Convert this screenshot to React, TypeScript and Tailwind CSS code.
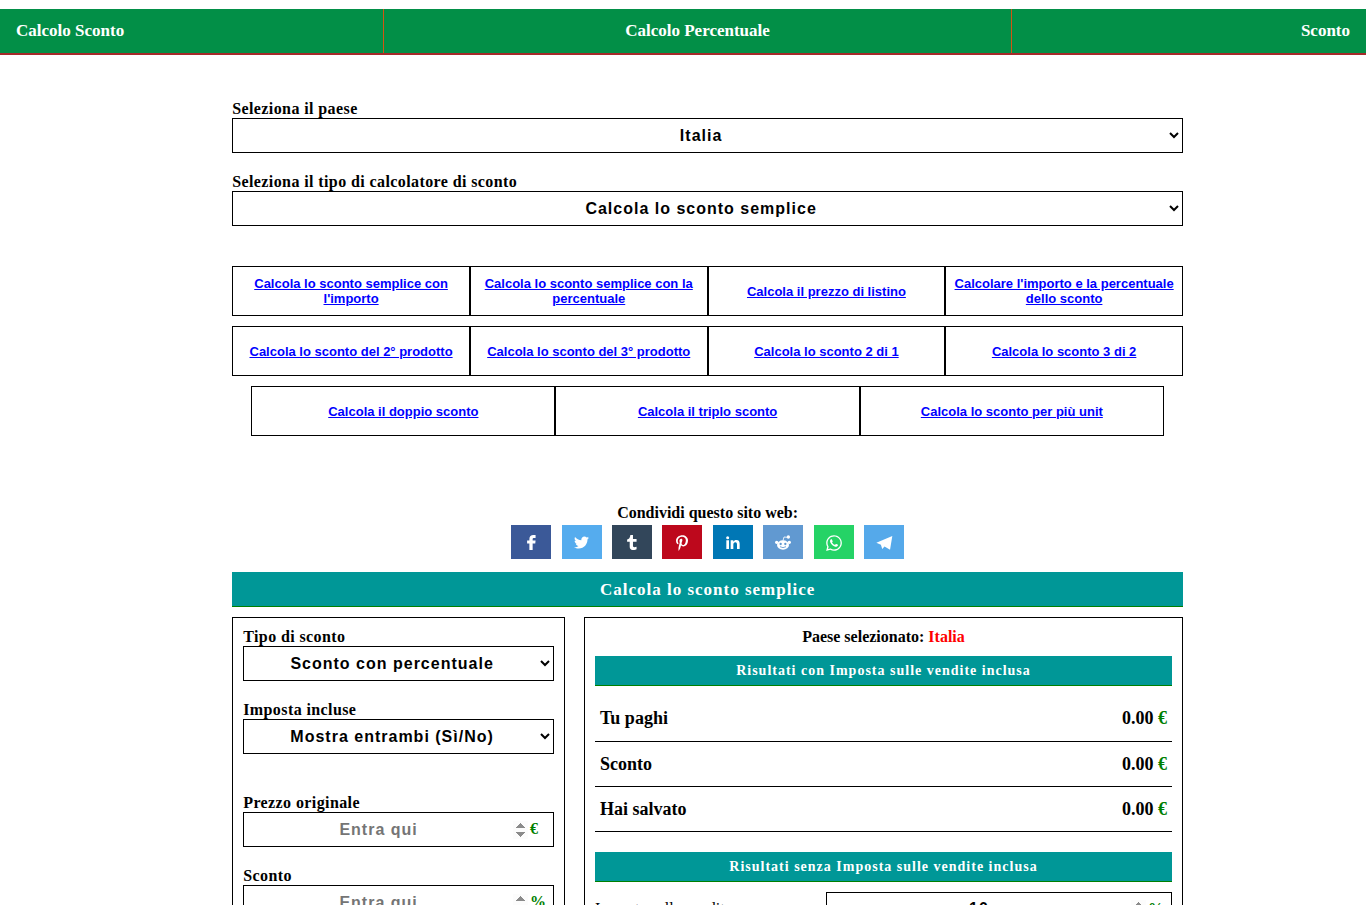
import type { ReactNode } from "react";
import { FaPinterestP, FaTwitter, FaWhatsapp } from "react-icons/fa";

const calculators = [
  "Calcola lo sconto semplice con l'importo",
  "Calcola lo sconto semplice con la percentuale",
  "Calcola il prezzo di listino",
  "Calcolare l'importo e la percentuale dello sconto",
  "Calcola lo sconto del 2° prodotto",
  "Calcola lo sconto del 3° prodotto",
  "Calcola lo sconto 2 di 1",
  "Calcola lo sconto 3 di 2",
];

const moreCalculators = [
  "Calcola il doppio sconto",
  "Calcola il triplo sconto",
  "Calcola lo sconto per più unit",
];

const networks = [
  {
    name: "Facebook",
    color: "bg-[#3b5998]",
    icon: (
      <svg className="w-[9px] h-[15px]" viewBox="0 0 27 46" fill="currentColor">
        <path d="M7 46V26H0v-9h7v-5C7 4 12 0 19 0h7v9h-4c-4 0-5 1-5 4v4h9l-1 9h-8v20z" />
      </svg>
    ),
  },
  { name: "Twitter", color: "bg-[#55acee]", icon: <FaTwitter size={15} /> },
  {
    name: "Tumblr",
    color: "bg-[#32465a]",
    icon: (
      <svg className="w-[10px] h-[15px]" viewBox="0 0 30 46" fill="currentColor">
        <path d="M10 0h8v12h11v9H18v13c0 4 5 4 11 2v8c-9 4-21 3-21-7V21H0v-7c6-1 9-6 10-14z" />
      </svg>
    ),
  },
  { name: "Pinterest", color: "bg-[#bd081c]", icon: <FaPinterestP size={16} /> },
  {
    name: "LinkedIn",
    color: "bg-[#0077b5]",
    icon: (
      <svg className="w-[14px] h-[13px]" viewBox="0 0 42 39" fill="currentColor">
        <circle cx="5" cy="5" r="4.500" />
        <path d="M1 13h8v26H1zM14 13h8v4c2-3 5-5 9-5 8 0 10 5 10 12v15h-8V26c0-4-1-7-5-7s-6 3-6 7v13h-8z" />
      </svg>
    ),
  },
  {
    name: "Reddit",
    color: "bg-[#6199d1]",
    icon: (
      <svg className="w-4 h-[15px]" viewBox="0 0 48 45" fill="currentColor">
        <ellipse cx="24" cy="30" rx="18" ry="14" />
        <circle cx="5" cy="22" r="5" />
        <circle cx="43" cy="22" r="5" />
        <circle cx="40" cy="6" r="5" />
        <path d="M24 17 27 6 38 7" fill="none" stroke="currentColor" strokeWidth="2.500" />
        <circle cx="17" cy="27" r="3.500" fill="#6199d1" />
        <circle cx="31" cy="27" r="3.500" fill="#6199d1" />
        <path d="M15 35q9 6 18 0" fill="none" stroke="#6199d1" strokeWidth="2.500" />
      </svg>
    ),
  },
  { name: "WhatsApp", color: "bg-[#25d366]", icon: <FaWhatsapp size={18} /> },
  {
    name: "Telegram",
    color: "bg-[#55a9ea]",
    icon: (
      <svg className="w-[17px] h-[14px]" viewBox="0 0 50 43" fill="currentColor">
        <path d="M49 0 0 21 14 27 18 40 25 32 42 42Z" />
      </svg>
    ),
  },
];

const results = ["Tu paghi", "Sconto", "Hai salvato"];

const labelClass = "block text-[16px] leading-[18px] font-bold tracking-wide";

const controlClass =
  "w-full h-[35px] border border-black bg-white text-center text-[16px] font-bold tracking-[1px] font-['Liberation_Sans',sans-serif]";

function SelectField({ id, label, options }: { id: string; label: string; options: string[] }) {
  return (
    <div>
      <label htmlFor={id} className={labelClass}>{label}</label>
      <select id={id} className={`${controlClass} pr-px`}>
        {options.map(option => (
          <option key={option}>{option}</option>
        ))}
      </select>
    </div>
  );
}

function NumberInput({ id, unit, defaultValue }: { id: string; unit: string; defaultValue?: number }) {
  return (
    <div className="relative">
      <input
        id={id}
        type="number"
        placeholder="Entra qui"
        defaultValue={defaultValue}
        className={`${controlClass} block pr-[25px] placeholder:text-[#757575] [&::-webkit-inner-spin-button]:opacity-100`}
      />
      <span className="absolute left-full top-2 -ml-6 text-[16px] leading-[18px] font-bold text-[#008000]">{unit}</span>
    </div>
  );
}

function NumberField({ id, label, unit }: { id: string; label: string; unit: string }) {
  return (
    <div>
      <label htmlFor={id} className={labelClass}>{label}</label>
      <NumberInput id={id} unit={unit} />
    </div>
  );
}

function CalculatorLink({ children }: { children: ReactNode }) {
  return (
    <div className="flex items-center justify-center h-[50px] border border-black px-2 text-center">
      <a href="#calcolo" className="text-[13px] leading-[15px] font-bold text-[#0000ff] underline font-['Liberation_Sans',sans-serif]">
        {children}
      </a>
    </div>
  );
}

function ResultsTable() {
  return (
    <table className="w-full mt-[10px] text-[18px] leading-5 font-bold border-collapse">
      <tbody>
        {results.map(name => (
          <tr key={name} className="h-[45px] border-b border-black">
            <th scope="row" className="px-[5px] text-left">{name}</th>
            <td className="px-[5px] text-right">
              0.00 <span className="text-[#008000]">€</span>
            </td>
          </tr>
        ))}
      </tbody>
    </table>
  );
}

function ResultsTitle({ children }: { children: ReactNode }) {
  return (
    <h3 className="bg-[#009797] border-b border-[#008000] text-white text-center text-[14px] leading-[29px] font-bold tracking-[1px]">
      {children}
    </h3>
  );
}

export default function App() {
  return (
    <div className="bg-white text-black font-['Liberation_Serif',serif] pt-[9px]">
      <nav className="grid grid-cols-[281fr_460fr_259fr] bg-[#028f47] border-b-2 border-[#a52a2a] text-white text-[17px] leading-[44px] font-bold">
        <a href="#calcolo-sconto" className="px-4 border-r border-[#d35413]">Calcolo Sconto</a>
        <a href="#calcolo-percentuale" className="px-4 border-r border-[#d35413] text-center">Calcolo Percentuale</a>
        <a href="#sconto" className="px-4 text-right">Sconto</a>
      </nav>

      <main className="ml-[17%] mr-[13.4%] pt-[45px] pb-10">
        <div className="flex flex-col gap-5">
          <SelectField id="country" label="Seleziona il paese" options={["Italia"]} />
          <SelectField id="calculator" label="Seleziona il tipo di calcolatore di sconto" options={["Calcola lo sconto semplice"]} />
        </div>

        <div className="grid grid-cols-4 gap-y-[10px] mt-10">
          {calculators.map(name => (
            <CalculatorLink key={name}>{name}</CalculatorLink>
          ))}
        </div>
        <div className="grid grid-cols-3 w-[96%] mx-auto mt-[10px]">
          {moreCalculators.map(name => (
            <CalculatorLink key={name}>{name}</CalculatorLink>
          ))}
        </div>

        <div className="mt-[68px] flex flex-col items-center">
          <p className="text-[16px] leading-[18px] font-bold">Condividi questo sito web:</p>
          <div className="flex justify-between w-[393px] mt-[3px]">
            {networks.map(network => (
              <button
                key={network.name}
                aria-label={network.name}
                className={`flex items-center justify-center w-10 h-[34px] pt-px text-white ${network.color}`}
              >
                {network.icon}
              </button>
            ))}
          </div>
        </div>

        <h2 className="mt-[13px] pt-0.5 bg-[#009797] border-b border-[#008000] text-white text-center text-[17px] leading-8 font-bold tracking-[1px]">
          Calcola lo sconto semplice
        </h2>

        <div className="flex justify-between mt-[10px]">
          <section className="w-[35%] border border-black p-[10px]">
            <div className="flex flex-col gap-5">
              <SelectField id="discount-type" label="Tipo di sconto" options={["Sconto con percentuale"]} />
              <SelectField id="tax" label="Imposta incluse" options={["Mostra entrambi (Sì/No)"]} />
            </div>
            <div className="flex flex-col gap-5 mt-10">
              <NumberField id="price" label="Prezzo originale" unit="€" />
              <NumberField id="discount" label="Sconto" unit="%" />
            </div>
          </section>

          <section className="w-[63%] border border-black p-[10px]">
            <p className="text-center text-[16px] leading-[18px] font-bold mb-[10px]">
              Paese selezionato: <span className="text-[#ff0000]">Italia</span>
            </p>
            <ResultsTitle>Risultati con Imposta sulle vendite inclusa</ResultsTitle>
            <ResultsTable />
            <div className="mt-5">
              <ResultsTitle>Risultati senza Imposta sulle vendite inclusa</ResultsTitle>
            </div>
            <div className="flex items-center justify-between mt-[10px]">
              <label htmlFor="vat" className="text-[16px] leading-[18px]">Imposta sulle vendite</label>
              <div className="w-[60%]">
                <NumberInput id="vat" unit="%" defaultValue={10} />
              </div>
            </div>
          </section>
        </div>
      </main>
    </div>
  );
}
